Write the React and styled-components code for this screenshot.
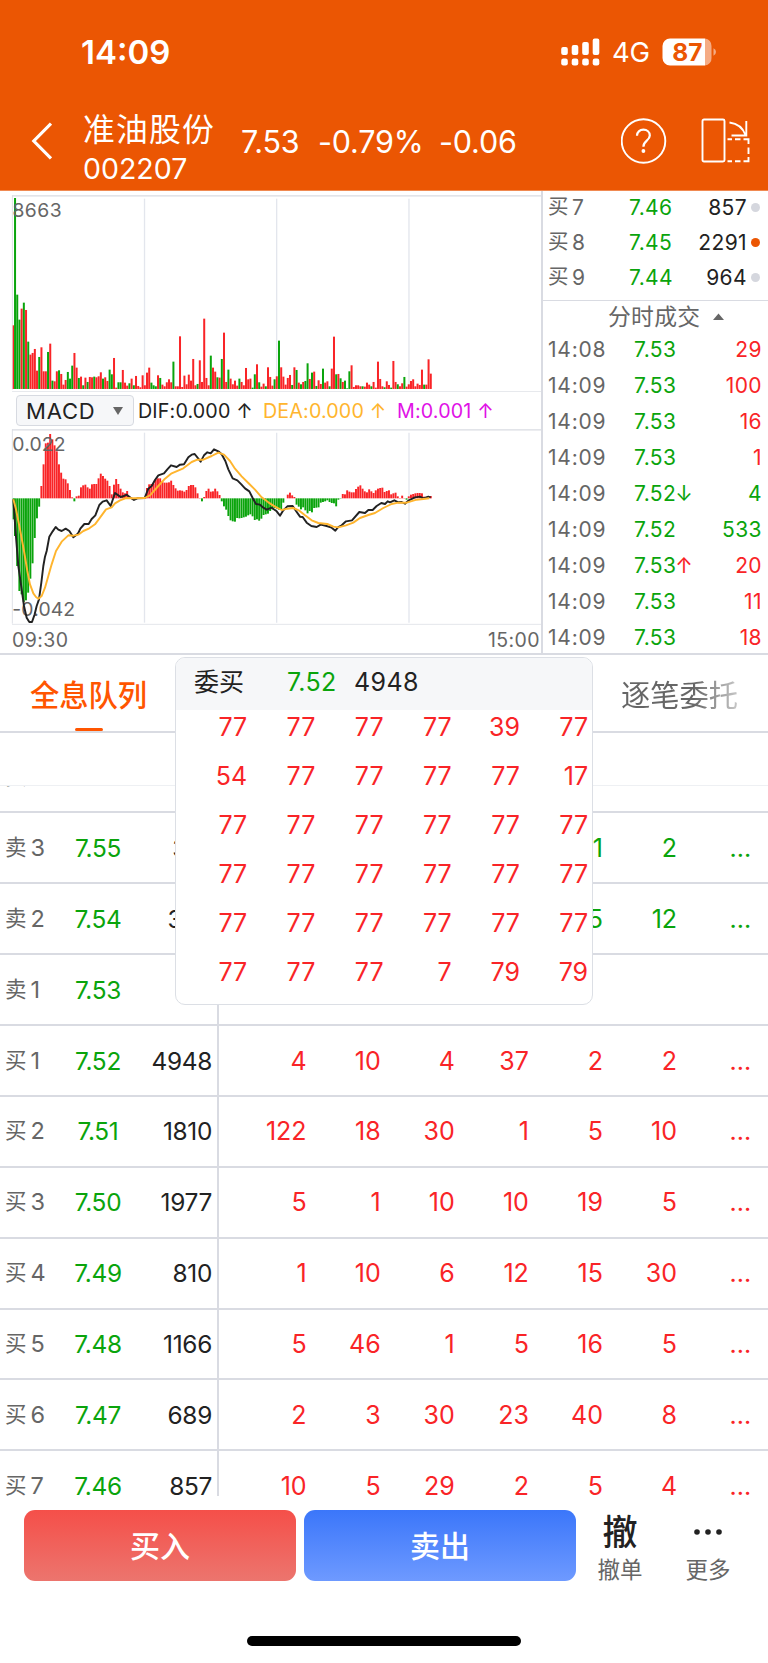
import React from "react";
import styled, { createGlobalStyle } from "styled-components";

const Global = createGlobalStyle`
  * { box-sizing: border-box; }
  html, body { margin: 0; padding: 0; background: #fff; }
  body {
    font-family: Inter, "Noto Sans CJK SC", "Liberation Sans", sans-serif;
    -webkit-font-smoothing: antialiased;
    color: #222;
  }
`;

const RED = "#f92427";
const GREEN = "#0aa40c";
const GREY = "#666";
const LINE = "#d9dbe2";
const tone = { r: RED, g: GREEN };

const Screen = styled.div`
  position: relative;
  width: 768px;
  height: 1663px;
  display: flex;
  flex-direction: column;
  overflow: hidden;
  background: #fff;
`;

/* ---------- header ---------- */
const Header = styled.header`
  flex: none;
  height: 191px;
  background: #eb5603;
  border-bottom: 1px solid #f08a52;
  color: #fff;
`;
const StatusBar = styled.div`
  height: 92px;
  padding: 11px 51px 0 81px;
  display: flex;
  align-items: center;
`;
const Clock = styled.span`
  flex: 1;
  font-size: 33px;
  font-weight: 600;
  letter-spacing: 0;
`;
const Network = styled.span`
  width: 38px;
  margin: 0 12px 0 12px;
  font-size: 27.5px;
  letter-spacing: -0.2px;
  white-space: nowrap;
`;
const NavBar = styled.div`
  height: 98px;
  padding: 0 0 0 31px;
  display: flex;
  align-items: center;
`;
const StockName = styled.div`
  width: 158px;
  margin-left: 31px;
  padding-top: 16px;
`;
const NameText = styled.div`
  font-size: 31.8px;
  line-height: 38px;
  letter-spacing: 1.2px;
  white-space: nowrap;
`;
const CodeText = styled.div`
  font-size: 28.5px;
  line-height: 39px;
  letter-spacing: 0;
`;
const Quote = styled.span`
  width: ${(p) => p.$w}px;
  padding-top: 1px;
  font-size: 30.5px;
  letter-spacing: -0.2px;
  white-space: nowrap;
`;
const NavIcons = styled.div`
  flex: 1;
  padding-left: 63px;
  display: flex;
  align-items: center;
  gap: 34px;
`;

/* ---------- market section ---------- */
const Market = styled.section`
  flex: none;
  height: 464px;
  display: flex;
  border-bottom: 2px solid ${LINE};
`;
const Charts = styled.div`
  width: 541px;
  padding-top: 4px;
  display: flex;
  flex-direction: column;
`;
const Plot = styled.svg`
  flex: none;
  display: block;
  overflow: hidden;
`;
const IndicatorBar = styled.div`
  flex: none;
  height: 37.2px;
  padding: 0 0 0 16px;
  display: flex;
  align-items: center;
`;
const IndicatorSelect = styled.div`
  width: 118px;
  height: 31px;
  margin-right: 4px;
  padding: 0 10px 0 9px;
  display: flex;
  align-items: center;
  justify-content: space-between;
  background: #f6f7f9;
  border: 1px solid #d7dae1;
  border-radius: 4px;
  font-size: 22px;
  letter-spacing: 0.8px;
`;
const Reading = styled.span`
  width: ${(p) => p.$w}px;
  padding-top: 1px;
  color: ${(p) => p.$c};
  font-size: 19.7px;
  letter-spacing: 0.15px;
  white-space: nowrap;
`;
const TimeAxis = styled.div`
  flex: none;
  height: 27px;
  padding: 3px 1px 0 12px;
  display: flex;
  align-items: center;
  justify-content: space-between;
  color: ${GREY};
  font-size: 19.5px;
  letter-spacing: 0.4px;
`;
const Side = styled.aside`
  flex: 1;
  display: flex;
  flex-direction: column;
  border-left: 2px solid ${LINE};
`;
const DepthList = styled.div`
  flex: none;
  height: 110px;
  border-bottom: 1.5px solid ${LINE};
`;
const DepthRow = styled.div`
  flex: none;
  height: 35.3px;
  padding: 0 7px 3px 5px;
  display: flex;
  align-items: center;
  font-size: 21px;
  letter-spacing: 0.4px;
`;
const SideLabel = styled.span`
  width: ${(p) => p.$w}px;
  color: ${GREY};
  font-size: 21px;
  line-height: 25px;
  letter-spacing: ${(p) => p.$ls || 0}px;
  white-space: nowrap;
`;
const Hanzi = styled.span`
  margin-right: ${(p) => p.$gap}px;
  font-size: ${(p) => p.$size}px;
  line-height: 1;
  vertical-align: ${(p) => p.$rise}px;
`;
const SidePrice = styled.span`
  width: 68px;
  color: ${GREEN};
  white-space: nowrap;
`;
const SideValue = styled.span`
  flex: 1;
  text-align: right;
  color: ${(p) => p.$c || "#222"};
`;
const Dot = styled.i`
  width: 9px;
  height: 9px;
  margin: 0 1px 0 4px;
  border-radius: 50%;
  background: ${(p) => (p.$on ? "#eb5603" : "#d5d7de")};
`;
const SideTitle = styled.div`
  flex: none;
  height: 31px;
  padding: 0 0 0 65px;
  display: flex;
  align-items: center;
  gap: 13px;
  color: ${GREY};
  font-size: 22.8px;
  line-height: 28px;
  letter-spacing: 0.3px;
`;
const TradeRow = styled(DepthRow)`
  height: 35.95px;
  padding: 0 6px 0 5px;
`;
const Arrow = styled.span`
  margin-left: -1px;
  color: ${(p) => p.$c};
`;

/* ---------- tabs ---------- */
const Tabs = styled.nav`
  flex: none;
  height: 78px;
  padding: 0 30px 0 30px;
  display: flex;
  justify-content: space-between;
  border-bottom: 2px solid ${LINE};
`;
const Tab = styled.div`
  width: ${(p) => p.$w}px;
  display: flex;
  flex-direction: column;
  align-items: center;
  padding-top: 20px;
  font-size: 29.3px;
  line-height: 42px;
  font-weight: ${(p) => (p.$active ? 500 : 400)};
  color: ${(p) => (p.$active ? "#ff5500" : GREY)};
  white-space: nowrap;
  &::after {
    content: "";
    width: 28px;
    height: 4px;
    margin-top: 10.5px;
    border-radius: 2px;
    background: ${(p) => (p.$active ? "#ff5500" : "transparent")};
  }
`;
const FadeText = styled.span`
  background: linear-gradient(90deg, #666 62%, #ddd 108%);
  -webkit-background-clip: text;
  background-clip: text;
  color: transparent;
`;

/* ---------- order queue ---------- */
const Spacer = styled.div`
  flex: none;
  height: 53px;
  border-bottom: 1.5px solid #eef0f3;
`;
const Queue = styled.section`
  flex: none;
  height: 710px;
  overflow: hidden;
  display: flex;
  flex-direction: column;
  justify-content: flex-start;
`;
const QueueRow = styled.div`
  flex: none;
  height: 70.88px;
  margin-top: ${(p) => p.$mt || 0}px;
  display: flex;
  border-bottom: 2px solid ${LINE};
`;
const Level = styled.div`
  width: 219px;
  padding: 0 5px 0 5px;
  display: flex;
  align-items: center;
  border-right: 2px solid ${LINE};
  font-size: 24.4px;
`;
const LevelName = styled.span`
  width: 60px;
  color: ${GREY};
  font-size: 23.5px;
  line-height: 30px;
  white-space: nowrap;
`;
const LevelPrice = styled.span`
  width: 66px;
  text-align: center;
  color: ${GREEN};
  letter-spacing: -0.3px;
`;
const LevelVolume = styled.span`
  flex: 1;
  text-align: right;
  letter-spacing: -0.3px;
`;
const Orders = styled.div`
  flex: 1;
  padding-left: 13.5px;
  display: grid;
  grid-template-columns: repeat(7, 74.1px);
  align-items: center;
  text-align: right;
  font-size: 25px;
  color: ${(p) => p.$c};
`;

/* ---------- popup ---------- */
const Popup = styled.div`
  position: absolute;
  left: 175px;
  top: 657px;
  width: 418px;
  height: 348px;
  overflow: hidden;
  background: #fff;
  border: 1.5px solid #dcdfe5;
  border-radius: 10px;
`;
const PopupHead = styled.div`
  height: 52px;
  padding: 0 0 4px 18px;
  display: flex;
  align-items: center;
  background: #f6f7f9;
  font-size: 25px;
  line-height: 30px;
`;
const PopupCell = styled.span`
  width: ${(p) => p.$w}px;
  padding-bottom: ${(p) => p.$pb || 0}px;
  color: ${(p) => p.$c || "#222"};
  letter-spacing: ${(p) => p.$ls || 0}px;
  white-space: nowrap;
`;
const PopupGrid = styled.div`
  margin-top: -7.8px;
  padding-left: 3px;
  display: grid;
  grid-template-columns: repeat(6, 68.2px);
  grid-auto-rows: 49.1px;
  align-items: center;
  text-align: right;
  color: ${RED};
  font-size: 25px;
`;

/* ---------- bottom actions ---------- */
const Actions = styled.footer`
  flex: none;
  height: 71px;
  margin-top: 14px;
  padding-left: 24px;
  display: flex;
  gap: 8px;
`;
const TradeButton = styled.button`
  width: 272px;
  height: 71px;
  padding: 0 0 4px;
  border: 0;
  border-radius: 11px;
  background: ${(p) => p.$bg};
  color: #fff;
  font-family: inherit;
  font-size: 30px;
  font-weight: 500;
`;
const MiniAction = styled.div`
  width: 88px;
  display: flex;
  flex-direction: column;
  align-items: center;
  color: ${GREY};
  font-size: 22.5px;
  line-height: 28px;
`;
const MiniGlyph = styled.div`
  flex: none;
  height: 44px;
  margin-bottom: 1.5px;
  display: flex;
  align-items: center;
  color: #222;
  font-size: 35px;
  line-height: 40px;
  font-weight: 500;
`;
const MiniLabel = styled.span`
  height: 28px;
  line-height: 28px;
`;
const Minis = styled.div`
  margin-left: -8px;
  display: flex;
`;
const HomeBar = styled.div`
  width: 274px;
  height: 10px;
  margin: 55px auto 0;
  border-radius: 5px;
  background: #000;
`;

/* ---------- data ---------- */
/* Each minute bar: colour flag followed by its top edge on the plot's 3x grid. */
const VOLUME = `r420 g38 g328 g403 r370 g352 r374 g469 r508 r503 r491 r556 g515 r486 r558 r558 g500 r475 g586 r588
r558 g555 r566 r598 r584 g560 g580 g541 r503 r547 g578 r574 g600 r577 g590 r575 r576 g574 r576 r573
r561 g580 r576 r587 g553 g567 r518 r607 g591 g591 r554 r592 r601 g594 r580 g600 r572 r602 r606 r570
r600 r562 r547 g592 g600 g603 r570 g578 r598 r603 r591 r582 r591 g529 r603 r603 r453 r605 r571 r597
r568 r586 r521 r600 g596 r525 r590 r400 r578 r600 g511 r547 r559 g576 r577 g521 r442 r590 g553 r580
r597 r586 r601 g580 r590 r600 r548 r582 r580 g607 g567 r537 g591 r604 r595 g603 r546 r575 r601 g582
r573 g466 r546 r574 r598 r578 r569 g599 r546 g554 r592 g597 r590 g587 g534 r581 g562 r559 g602 r585
r596 g550 r592 r588 g603 r550 r454 g567 r566 g579 r590 g586 g609 g558 r540 r605 r600 r600 r603 g603
r604 r592 r598 g603 r590 r607 r529 r581 r603 g606 r588 r599 g607 r527 r590 g597 r603 r594 g575 r604
r597 r587 r582 r603 r595 r599 r553 g598 r598 r522 r565`
  .split(/\s+/)
  .map((s) => [s[0], Number(s.slice(1))]);

const HISTOGRAM = `300 350 440 515 525 548 543 520 478 432 356 297 262 200 135 72 70 44 60 78 96 135 160 178 180 192 212 234 246 231
229 204 198 196 204 208 195 194 194 177 163 170 178 184 200 225 196 179 194 208 219 222 215 231 236 241 240 237 237 237 236
206 195 194 193 180 177 177 187 190 190 189 184 197 207 214 213 214 217 212 200 197 197 204 222 236 246 233 215 208
217 216 208 216 227 246 261 271 290 303 306 307 296 297 296 294 292 288 285 291 302 300 304 298 287 285 283 275 270 266
268 271 272 250 237 226 220 228 233 256 262 270 264 273 282 275 279 266 265 264 250 248 246 243 248 251 252 261 241 238
224 225 213 217 219 219 209 202 198 208 216 219 210 216 221 213 208 206 205 218 215 213 225 222 220 231 236 229 236 241
231 226 224 222 221 221 222 232 235 236 230`
  .split(/\s+/)
  .map(Number);

const DIF_LINE =
  "40,240 47,340 55,440 65,510 72,560 80,595 88,608 96,608 104,585 110,560 117,540 124,490 130,440 135,412 140,395 148,352 158,336 167,323 175,331 185,335 197,328 208,335 220,354 228,348 235,341 241,328 253,314 266,314 275,299 286,288 298,257 308,247 320,243 332,260 345,221 355,228 362,233 372,230 380,226 390,234 402,242 412,237 434,236 445,208 455,200 465,182 475,168 492,162 502,150 513,138 530,143 540,136 552,135 565,114 575,106 584,104 602,127 612,108 622,99 632,102 642,90 655,96 665,105 676,125 685,150 698,177 712,183 724,195 735,207 748,216 758,236 768,254 780,256 790,265 800,271 815,265 830,276 840,289 850,273 862,261 878,260 888,275 900,292 908,293 920,310 934,320 950,323 962,316 980,320 995,325 1006,334 1015,323 1025,318 1038,306 1056,303 1078,278 1095,281 1105,272 1118,272 1130,260 1144,251 1155,254 1163,246 1170,249 1183,243 1195,249 1205,248 1215,253 1225,244 1245,234 1260,232 1270,237 1285,232 1292,234";
const DEA_LINE =
  "40,240 48,270 60,330 72,395 82,455 90,495 100,522 108,533 115,538 125,530 135,505 145,470 155,435 168,395 185,367 205,348 220,349 235,346 250,335 268,327 285,315 300,295 318,270 335,264 345,252 360,243 378,236 400,237 434,236 450,228 475,200 495,178 515,162 550,147 575,128 592,121 610,121 635,110 655,100 672,106 690,125 705,148 725,171 745,191 765,211 785,234 805,249 825,262 845,272 862,268 880,266 898,274 915,288 935,303 955,311 982,314 1000,322 1015,324 1038,318 1060,310 1080,296 1105,287 1125,281 1150,266 1175,254 1195,250 1220,250 1250,241 1270,239 1288,237";

const DEPTH = [
  ["7", "7.46", "857", false],
  ["8", "7.45", "2291", true],
  ["9", "7.44", "964", false],
];
const TRADES = [
  ["14:08", "7.53", "", "29", "r"],
  ["14:09", "7.53", "", "100", "r"],
  ["14:09", "7.53", "", "16", "r"],
  ["14:09", "7.53", "", "1", "r"],
  ["14:09", "7.52", "↓", "4", "g"],
  ["14:09", "7.52", "", "533", "g"],
  ["14:09", "7.53", "↑", "20", "r"],
  ["14:09", "7.53", "", "11", "r"],
  ["14:09", "7.53", "", "18", "r"],
];
const QUEUE = [
  ["卖", 4, "", "", "g", []],
  ["卖", 3, "7.55", "314", "g", ["", "", "", "", "1", "2", "..."]],
  ["卖", 2, "7.54", "368", "g", ["", "", "", "", "5", "12", "..."]],
  ["卖", 1, "7.53", "", "g", []],
  ["买", 1, "7.52", "4948", "r", [4, 10, 4, 37, 2, 2, "..."]],
  ["买", 2, "7.51", "1810", "r", [122, 18, 30, 1, 5, 10, "..."]],
  ["买", 3, "7.50", "1977", "r", [5, 1, 10, 10, 19, 5, "..."]],
  ["买", 4, "7.49", "810", "r", [1, 10, 6, 12, 15, 30, "..."]],
  ["买", 5, "7.48", "1166", "r", [5, 46, 1, 5, 16, 5, "..."]],
  ["买", 6, "7.47", "689", "r", [2, 3, 30, 23, 40, 8, "..."]],
  ["买", 7, "7.46", "857", "r", [10, 5, 29, 2, 5, 4, "..."]],
];
const POPUP = [
  77, 77, 77, 77, 39, 77,
  54, 77, 77, 77, 77, 17,
  77, 77, 77, 77, 77, 77,
  77, 77, 77, 77, 77, 77,
  77, 77, 77, 77, 77, 77,
  77, 77, 77, 7, 79, 79,
];

/* ---------- drawings ---------- */
const SignalIcon = () => (
  <svg width="39" height="28" viewBox="0 0 39 28" fill="#fff">
    {[9, 7, 4, 0.5].map((y, i) => (
      <React.Fragment key={i}>
        <rect x={0.2 + i * 10.5} y={y} width="6.6" height={17 - y} rx="2" />
        <rect x={0.2 + i * 10.5} y="20.5" width="6.6" height="7" rx="2.2" />
      </React.Fragment>
    ))}
  </svg>
);
const BatteryIcon = () => (
  <svg width="55" height="28" viewBox="0 0 55 28">
    <path d="M8 0.5H43V27.5H8a7.5 7.5 0 0 1-7.5-7.5V8A7.5 7.5 0 0 1 8 .5Z" fill="#fff" />
    <path d="M43 .5a7 7 0 0 1 6.500 7.500V20a7 7 0 0 1-6.500 7.500Z" fill="#f5ab84" />
    <path d="M51.500 10.200q2.500 1.300 2.500 3.800t-2.500 3.800Z" fill="#f5ab84" />
    <text x="25.3" y="22.7" textAnchor="middle" fontSize="24.5" fontWeight="700" fill="#eb5603" letterSpacing="0">87</text>
  </svg>
);
const BackIcon = () => (
  <svg width="21" height="38" viewBox="0 0 21 38" fill="none" stroke="#fff" strokeWidth="3.2">
    <path d="M20 1.500 2.800 19 20 36.500" />
  </svg>
);
const HelpIcon = () => (
  <svg width="46" height="46" viewBox="0 0 46 46" fill="none" stroke="#fff" strokeWidth="1.9">
    <circle cx="22.500" cy="23" r="21.800" />
    <path d="M16 17.700c0-3.700 2.800-6 6.400-6s6.400 2.300 6.400 5.800c0 5.200-6.400 5.200-6.400 11.200" strokeWidth="2.200" />
    <circle cx="22.400" cy="33" r="1.900" fill="#fff" stroke="none" />
  </svg>
);
const RotateIcon = () => (
  <svg width="49" height="46" viewBox="0 0 49 46" fill="none" stroke="#fff" strokeWidth="1.9">
    <rect x="1.500" y="1.500" width="22" height="42" rx="1.500" />
    <path d="M28.500 4.500q12 1.500 16 12.500M45.300 3V17.500H30.500" />
    <path d="M26.500 21.200H31M34 21.200H39.500M42.500 21.200H47.500V26M47.500 29.500V36M47.500 39V43.300H42.500M39.500 43.300H34M31 43.300H26.500" />
  </svg>
);

const GRID_X = [433.5, 830, 1227];
const PITCH = 6.6;
const barX = (i) => (i === 0 ? 38 : 35.4 + i * PITCH);

const Grid = ({ bottom }) => (
  <>
    {GRID_X.map((x) => (
      <path key={x} d={`M${x} 40V610`} stroke="#e3e6ed" strokeWidth="4" />
    ))}
    <path d="M37 30V613" stroke="#dfe1e7" strokeWidth="3" />
    <path d="M36 31.500H1626" stroke={LINE} strokeWidth="3.500" />
    <path d={`M36 ${bottom}H1626`} stroke="#e4e6eb" strokeWidth="3" />
  </>
);
const VolumePlot = () => (
  <Plot width="542" height="197.300" viewBox="0 29 1626 592">
    <Grid bottom={619} />
    {VOLUME.map(([c, top], i) => (
      <rect key={i} x={barX(i)} y={top} width={i === 0 ? 4 : 6} height={611 - top} fill={tone[c]} />
    ))}
    <text x="37" y="96" fontSize="58" letterSpacing="1.5" fill={GREY}>8663</text>
  </Plot>
);
const MacdPlot = () => (
  <Plot width="542" height="196" viewBox="0 29 1626 588">
    <Grid bottom={615} />
    {HISTOGRAM.map((v, i) => (
      <rect key={i} x={barX(i)} y={Math.min(v, 237)} width={i === 0 ? 4 : 5.8} height={Math.abs(v - 237)} fill={v > 237 ? GREEN : RED} />
    ))}
    <text x="37" y="96" fontSize="58" letterSpacing="0.5" fill={GREY}>0.022</text>
    <text x="37" y="590" fontSize="58" letterSpacing="0.4" fill={GREY}>-0.042</text>
    <polyline points={DIF_LINE} fill="none" stroke="#222" strokeWidth="5.800" strokeLinejoin="round" />
    <polyline points={DEA_LINE} fill="none" stroke="#ffb52e" strokeWidth="5.800" strokeLinejoin="round" />
  </Plot>
);

export default function App() {
  return (
    <Screen>
      <Global />
      <Header>
        <StatusBar>
          <Clock>14:09</Clock>
          <SignalIcon />
          <Network>4G</Network>
          <BatteryIcon />
        </StatusBar>
        <NavBar>
          <BackIcon />
          <StockName>
            <NameText>准油股份</NameText>
            <CodeText>002207</CodeText>
          </StockName>
          <Quote $w={77}>7.53</Quote>
          <Quote $w={121}>-0.79%</Quote>
          <Quote $w={119}>-0.06</Quote>
          <NavIcons>
            <HelpIcon />
            <RotateIcon />
          </NavIcons>
        </NavBar>
      </Header>

      <Market>
        <Charts>
          <VolumePlot />
          <IndicatorBar>
            <IndicatorSelect>
              MACD
              <svg width="10" height="8" viewBox="0 0 10 8"><path d="M0 0H10L5 8Z" fill={GREY} /></svg>
            </IndicatorSelect>
            <Reading $w={125} $c="#222">DIF:0.000 ↑</Reading>
            <Reading $w={134} $c="#ffb52e">DEA:0.000 ↑</Reading>
            <Reading $w={100} $c="#e012e6">M:0.001 ↑</Reading>
          </IndicatorBar>
          <MacdPlot />
          <TimeAxis>
            <span>09:30</span>
            <span>15:00</span>
          </TimeAxis>
        </Charts>
        <Side>
          <DepthList>
            {DEPTH.map(([n, price, vol, on]) => (
              <DepthRow key={n}>
                <SideLabel $w={81}>
                  <Hanzi $size={20.5} $gap={3.5} $rise={1}>买</Hanzi>
                  {n}
                </SideLabel>
                <SidePrice>{price}</SidePrice>
                <SideValue>{vol}</SideValue>
                <Dot $on={on} />
              </DepthRow>
            ))}
          </DepthList>
          <SideTitle>
            分时成交
            <svg width="11" height="8" viewBox="0 0 11 8"><path d="M0 7L5.500 0.500L11 7Z" fill={GREY} /></svg>
          </SideTitle>
          {TRADES.map(([time, price, arrow, vol, c], i) => (
            <TradeRow key={i}>
              <SideLabel $w={86} $ls={0.8}>{time}</SideLabel>
              <SidePrice>
                {price}
                <Arrow $c={tone[c]}>{arrow}</Arrow>
              </SidePrice>
              <SideValue $c={tone[c]}>{vol}</SideValue>
            </TradeRow>
          ))}
        </Side>
      </Market>

      <Tabs>
        <Tab $active $w={117}>全息队列</Tab>
        <Tab $w={117}><FadeText>逐笔委托</FadeText></Tab>
      </Tabs>
      <Spacer />
      <Queue>
        {QUEUE.map(([side, n, price, vol, c, orders], i) => (
          <QueueRow key={i} $mt={i === 0 ? -43.4 : 0}>
            <Level>
              <LevelName>
                <Hanzi $size={21.5} $gap={4} $rise={1}>{side}</Hanzi>
                {n}
              </LevelName>
              <LevelPrice>{price}</LevelPrice>
              <LevelVolume>{vol}</LevelVolume>
            </Level>
            <Orders $c={tone[c]}>
              {orders.map((o, k) => (
                <span key={k}>{o}</span>
              ))}
            </Orders>
          </QueueRow>
        ))}
      </Queue>

      <Actions>
        <TradeButton $bg="linear-gradient(#f54f49, #ec756e)">买入</TradeButton>
        <TradeButton $bg="linear-gradient(#3b76fa, #6e9aff)">卖出</TradeButton>
        <Minis>
          <MiniAction>
            <MiniGlyph>撤</MiniGlyph>
            <MiniLabel>撤单</MiniLabel>
          </MiniAction>
          <MiniAction>
            <MiniGlyph>
              <svg width="30" height="8" viewBox="0 0 30 8" fill="#222">
                <circle cx="4" cy="4" r="2.800" />
                <circle cx="15" cy="4" r="2.800" />
                <circle cx="26" cy="4" r="2.800" />
              </svg>
            </MiniGlyph>
            <MiniLabel>更多</MiniLabel>
          </MiniAction>
        </Minis>
      </Actions>
      <HomeBar />

      <Popup>
        <PopupHead>
          <PopupCell $w={93} $pb={1} $ls={0}>委买</PopupCell>
          <PopupCell $w={67} $c={GREEN} $ls={0.3}>7.52</PopupCell>
          <PopupCell $w={80} $ls={0.4}>4948</PopupCell>
        </PopupHead>
        <PopupGrid>
          {POPUP.map((v, i) => (
            <span key={i}>{v}</span>
          ))}
        </PopupGrid>
      </Popup>
    </Screen>
  );
}
